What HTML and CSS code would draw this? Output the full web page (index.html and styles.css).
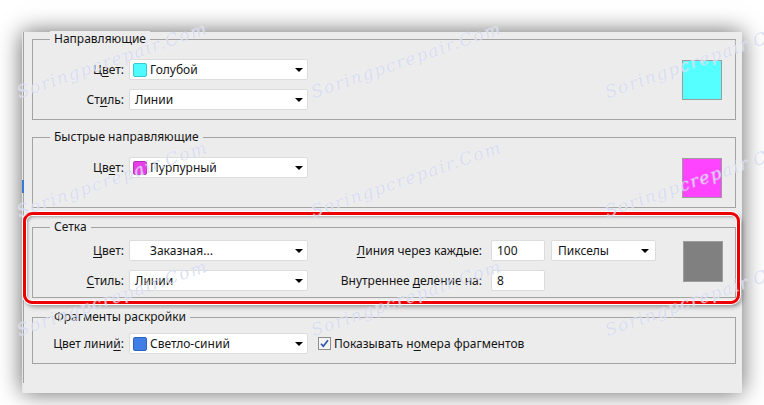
FILE: index.html
```html
<!DOCTYPE html>
<html lang="ru">
<head>
    <meta charset="UTF-8">
    <title>Направляющие, сетка и фрагменты</title>
    <link rel="stylesheet" href="styles.css">
</head>
<body>

<div class="page">
    <div class="dialog">
        <div class="content">

            <div class="group">
                <div class="group-title">Направляющие</div>
                <div class="group-body body-guides">
                    <div class="fields">
                        <div class="row">
                            <span class="label">Ц<u>в</u>ет:</span>
                            <div class="select"><span class="chip chip-cyan"></span>Голубой</div>
                        </div>
                        <div class="row">
                            <span class="label">Ст<u>и</u>ль:</span>
                            <div class="select select-plain">Линии</div>
                        </div>
                    </div>
                    <div class="preview preview-cyan"></div>
                </div>
            </div>

            <div class="group group-smart">
                <div class="group-title">Быстрые направляющие</div>
                <div class="group-body body-guides">
                    <div class="fields">
                        <div class="row">
                            <span class="label">Цв<u>е</u>т:</span>
                            <div class="select"><span class="chip chip-magenta"></span>Пурпурный</div>
                        </div>
                    </div>
                    <div class="preview preview-magenta"></div>
                </div>
            </div>

            <div class="highlight">
                <div class="group group-grid">
                    <div class="group-title">Сетка</div>
                    <div class="grid-body">
                        <span class="label"><u>Ц</u>вет:</span>
                        <div class="select select-custom">Заказная...</div>
                        <span class="label label-wide"><u>Л</u>иния через каждые:</span>
                        <div class="input">100</div>
                        <div class="select select-units">Пикселы</div>
                        <div class="preview preview-grey"></div>

                        <span class="label"><u>С</u>тиль:</span>
                        <div class="select select-plain">Линии</div>
                        <span class="label label-wide">Внутреннее <u>д</u>еление на:</span>
                        <div class="input">8</div>
                    </div>
                </div>
            </div>

            <div class="group group-slices">
                <div class="group-title">Фрагменты раскройки</div>
                <div class="group-body body-slices">
                    <div class="row">
                        <span class="label">Цвет лини<u>й</u>:</span>
                        <div class="select"><span class="chip chip-blue"></span>Светло-синий</div>
                        <label class="check">
                            <svg class="check-box" width="13" height="13" viewBox="0 0 13 13">
                                <rect x="0.5" y="0.5" width="12" height="12" fill="#f4f4f4" stroke="#8e8e8e"/>
                                <path d="M3 6.8 L5.3 9.3 L10 3.2" fill="none" stroke="#2a4fa8" stroke-width="1.6"/>
                            </svg>
                            Показывать н<u>о</u>мера фрагментов
                        </label>
                    </div>
                </div>
            </div>

        </div>
    </div>

    <div class="watermarks">
        <span class="wm">Soringpcrepair.Com</span>
        <span class="wm">Soringpcrepair.Com</span>
        <span class="wm">Soringpcrepair.Com</span>
        <span class="wm">Soringpcrepair.Com</span>
        <span class="wm">Soringpcrepair.Com</span>
        <span class="wm">Soringpcrepair.Com</span>
        <span class="wm">Soringpcrepair.Com</span>
        <span class="wm">Soringpcrepair.Com</span>
        <span class="wm">Soringpcrepair.Com</span>
    </div>
</div>

</body>
</html>
```

FILE: styles.css
```css
body {
    margin: 0;
    background-color: #fff;
    font-family: "Noto Sans", "Open Sans", sans-serif;
    font-size: 12px;
    color: #151515;
}
u {
    text-underline-offset: 2px;
}
.page {
    position: relative;
    width: 764px;
    height: 405px;
    overflow: hidden;
    padding: 22px 0 0 22px;
    box-sizing: border-box;
}
.dialog {
    position: relative;
    width: 720px;
    height: 361px;
    background-color: #ececec;
    border-left: 1px solid #e4e4e4;
    box-sizing: border-box;
    box-shadow: 0 0 22px rgba(0, 0, 0, 0.6);
}
.dialog::before {
    content: "";
    position: absolute;
    left: -1px;
    top: 148px;
    width: 2px;
    height: 13px;
    background-color: #3a78d8;
}
.content {
    margin-top: 10px;
    height: 351px;
    padding-top: 7px;
    border-left: 1px solid #a3a3a3;
    box-sizing: border-box;
}
.group {
    margin: 0 6px 0 8px;
    border: 1px solid #a3a3a3;
}
.group-smart {
    margin-top: 17px;
}
.group-slices {
    margin-top: 13px;
}
.group-title {
    display: table;
    margin: -9px 0 0 17px;
    padding: 0 4px;
    line-height: 16px;
    background-color: #ececec;
}
.group-body {
    display: flex;
    align-items: flex-start;
    padding: 12px 13px 9px 0;
}
.body-slices {
    padding-top: 8px;
}
.fields {
    display: flex;
    flex-direction: column;
    gap: 9px;
}
.row {
    display: flex;
    align-items: center;
    height: 21px;
}
.label {
    width: 91px;
    margin-right: 5px;
    text-align: right;
    white-space: nowrap;
}
.select {
    display: flex;
    align-items: center;
    width: 179px;
    height: 21px;
    padding-left: 3px;
    background-color: #fff;
    border: 1px solid #dcdcdc;
    border-radius: 2px;
    box-sizing: border-box;
    white-space: nowrap;
}
.select::after {
    content: "";
    margin: 1px 4px 0 auto;
    border-top: 4px solid #000;
    border-left: 4px solid transparent;
    border-right: 4px solid transparent;
}
.select-plain {
    padding-left: 5px;
}
.select-custom {
    padding-left: 20px;
}
.select-units {
    width: 105px;
    padding-left: 6px;
}
.select-units::after {
    margin-right: 6px;
}
.chip {
    width: 14px;
    height: 14px;
    margin-right: 3px;
    border-radius: 2px;
    box-sizing: border-box;
}
.chip-cyan {
    background-color: #4ffbff;
    border: 1px solid #38c9cf;
}
.chip-magenta {
    background-color: #e53fe8;
    border: 1px solid #b52fb8;
}
.chip-blue {
    background-color: #3f7fe6;
    border: 1px solid #2d62bd;
}
.preview {
    width: 40px;
    height: 40px;
    margin: 1px 0 0 auto;
    border: 1px solid #9c9c9c;
    box-sizing: border-box;
}
.preview-cyan {
    background-color: #55ffff;
}
.preview-magenta {
    background-color: #ff44ff;
}
.preview-grey {
    background-color: #808080;
    grid-row: span 2;
    margin: 1px 12px 0 auto;
    height: 41px;
}
.highlight {
    margin: 4px 2px 0 -1px;
    padding: 12px 1px 3px 6px;
    border: 3px solid #ee0000;
    border-radius: 9px;
    box-shadow: 0 0 0 1px #fff, 2px 3px 4px rgba(0, 0, 0, 0.35), inset 0 0 0 1px #fff, inset 2px 2px 3px rgba(0, 0, 0, 0.3);
}
.group-grid {
    margin: 0;
}
.grid-body {
    display: grid;
    grid-template-columns: 96px 179px 183px 60px 105px 1fr;
    grid-template-rows: 21px 20px;
    row-gap: 9px;
    align-items: center;
    padding: 5px 0 7px 0;
}
.grid-body .label {
    width: auto;
    margin-right: 5px;
}
.grid-body .label-wide {
    margin-right: 9px;
}
.grid-body .preview {
    align-self: start;
}
.input {
    width: 54px;
    height: 21px;
    padding-left: 5px;
    line-height: 19px;
    background-color: #fff;
    border: 1px solid #dcdcdc;
    border-radius: 2px;
    box-sizing: border-box;
}
.check {
    display: flex;
    align-items: center;
    margin-left: 10px;
    white-space: nowrap;
}
.check-box {
    margin-right: 3px;
}
.watermarks {
    position: absolute;
    left: -35px;
    top: 0;
    display: grid;
    grid-template-columns: repeat(3, 294px);
    grid-auto-rows: 119px;
    pointer-events: none;
}
.wm {
    place-self: center;
    transform: rotate(-19deg);
    font-family: "DejaVu Serif", serif;
    font-style: italic;
    font-size: 17px;
    letter-spacing: 1.5px;
    color: rgba(165, 175, 225, 0.42);
    text-shadow: 0 0 1px #fff;
    white-space: nowrap;
}
```
